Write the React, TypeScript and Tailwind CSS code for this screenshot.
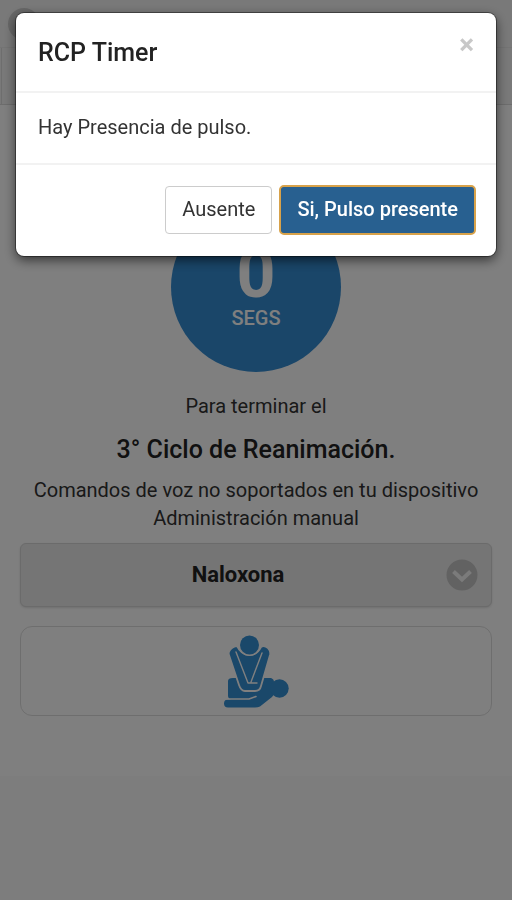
import React from "react";

function CprIcon() {
  return (
    <svg viewBox="0 0 68 76" className="h-[76px] w-[68px]" aria-hidden="true">
      <g fill="#3490d4">
        <path d="M11 45h38q3 1 3 4v11q0 2-2 4L38 73.500q-2 1-5 1H6q-4 0-4-4t4-4H9q-3-1-3-4V48q0-3 5-3z" />
        <circle cx="57.500" cy="55.500" r="9.200" />
        <path
          d="M15 13 Q11 13 8 17 Q6 19 7 22 L17 52 Q19 58 23 58 H33 Q38 58 39 53 L48 22 Q49 18 46 15 Q42 12 39 14 Q35 22 27.500 22 Q19 22 15 13z"
          stroke="#fff"
          strokeWidth="1.800"
          strokeLinejoin="round"
        />
        <circle cx="27.500" cy="12" r="11" fill="#fff" />
        <circle cx="27.500" cy="12" r="9.500" />
      </g>
      <g fill="none" stroke="#fff" strokeLinecap="round" strokeLinejoin="round">
        <path d="M14 19 L26 50 H35 M40 20 L29 49" strokeWidth="1.400" />
        <path d="M4 66H27L34 63.500" strokeWidth="1.600" />
      </g>
    </svg>
  );
}

function TimerPage() {
  return (
    <div className="min-h-screen bg-[#fbfbfb]">
      <header className="h-[105px] border-b border-[#dadada] bg-[#f2f2f2]">
        <div className="flex h-12 items-center border-b border-[#e8e8e8] px-2">
          <button
            type="button"
            aria-label="Volver"
            className="h-8 w-8 rounded-full bg-[#cfcfcf]"
          />
        </div>
        <div className="ml-px h-14 border-l border-[#dddddd]" />
      </header>
      <main className="h-[671px] bg-white px-5 pt-[97px] text-center">
        <div className="mx-auto flex h-[170px] w-[170px] flex-col items-center rounded-full bg-[#348cd2] pt-8 font-bold text-white">
          <span className="text-[68px] leading-[80px]">0</span>
          <span className="-mt-1 text-[20px] leading-4 font-medium">SEGS</span>
        </div>
        <p className="mt-5 text-[20px] leading-7">Para terminar el</p>
        <h1 className="mt-3 text-[25px] leading-9 font-medium text-[#222]">
          3° Ciclo de Reanimación.
        </h1>
        <p className="-mx-4 mt-2 text-[20px] leading-7">
          Comandos de voz no soportados en tu dispositivo
          <br />
          Administración manual
        </p>
        <div className="relative mt-[11px]">
          <select
            aria-label="Medicamento"
            className="h-16 w-full appearance-none rounded-md border border-[#d6d6d6] bg-[#ebebeb] pr-9 pb-0.5 text-center text-[22px] font-bold text-[#222] shadow-sm"
          >
            <option>Naloxona</option>
          </select>
          <svg
            viewBox="0 0 32 32"
            className="pointer-events-none absolute top-4 right-3.5 h-8 w-8"
            aria-hidden="true"
          >
            <circle cx="16" cy="16" r="15.500" fill="#c4c4c4" />
            <path d="M7.500 12.500l8.500 8 8.500-8" fill="none" stroke="#f6f6f6" strokeWidth="4" />
          </svg>
        </div>
        <button
          type="button"
          aria-label="Reanimación"
          className="mt-[19px] flex h-[90px] w-full items-center justify-center rounded-xl border border-[#dddddd] bg-white"
        >
          <CprIcon />
        </button>
      </main>
    </div>
  );
}

function PulseDialog() {
  return (
    <div className="fixed inset-0 bg-black/50 px-4 pt-[13px]">
      <section
        role="dialog"
        aria-modal="true"
        aria-labelledby="dialog-title"
        className="rounded-lg bg-white shadow-[0_4px_12px_rgba(0,0,0,0.6),0_0_0_1px_rgba(0,0,0,0.4)]"
      >
        <header className="flex h-20 items-start justify-between border-b-2 border-[#f2f2f2] px-[22px] pt-[22px]">
          <h2 id="dialog-title" className="text-[25px] leading-9 font-medium text-[#222]">
            RCP Timer
          </h2>
          <button
            type="button"
            aria-label="Cerrar"
            className="h-5 text-[28px] leading-5 font-bold text-[#c8c8c8]"
          >
            ×
          </button>
        </header>
        <p className="h-[72px] border-b-2 border-[#f2f2f2] px-[22px] pt-5 text-[20px] leading-7">
          Hay Presencia de pulso.
        </p>
        <footer className="flex justify-end gap-2 px-[21px] pt-[21px] pb-[22px]">
          <button
            type="button"
            className="h-12 rounded border border-[#cccccc] px-4 pb-0.5 text-[20px]"
          >
            Ausente
          </button>
          <button
            type="button"
            className="h-12 rounded border border-[#204d74] bg-[#286090] px-4 pb-0.5 text-[20px] font-medium text-white outline-2 -outline-offset-1 outline-[#d8a24a]"
          >
            Si, Pulso presente
          </button>
        </footer>
      </section>
    </div>
  );
}

export default function App() {
  return (
    <div className="font-[Roboto,sans-serif] text-[#333]">
      <TimerPage />
      <PulseDialog />
    </div>
  );
}
